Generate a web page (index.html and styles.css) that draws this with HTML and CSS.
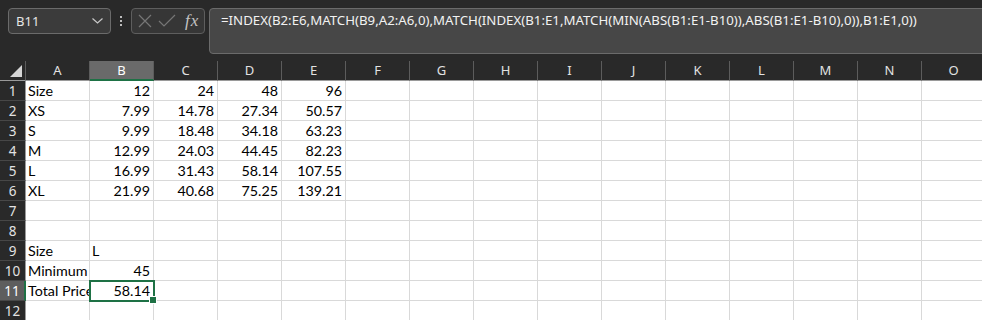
FILE: index.html
```html
<!DOCTYPE html>
<html lang="en">
<head>
    <meta charset="UTF-8">
    <title>Workbook</title>
    <link rel="stylesheet" href="styles.css">
</head>
<body>
    <div class="toolbar">
        <div class="name-box">
            <span>B11</span>
            <svg class="chevron" width="11" height="6" viewBox="0 0 11 6"><polyline points="0.5,0.5 5.5,5 10.5,0.5" fill="none" stroke="#c8c8c8" stroke-width="1.2"/></svg>
        </div>
        <div class="grip"><i></i><i></i><i></i></div>
        <div class="fx-box">
            <svg width="14" height="14" viewBox="0 0 14 14"><path d="M1 1 L13 13 M13 1 L1 13" stroke="#767676" stroke-width="1.2"/></svg>
            <svg width="18" height="14" viewBox="0 0 18 14"><polyline points="1,7 6,12 17,1" fill="none" stroke="#767676" stroke-width="1.2"/></svg>
            <span class="fx">fx</span>
        </div>
        <div class="formula">=INDEX(B2:E6,MATCH(B9,A2:A6,0),MATCH(INDEX(B1:E1,MATCH(MIN(ABS(B1:E1-B10)),ABS(B1:E1-B10),0)),B1:E1,0))</div>
    </div>

    <div class="sheet">
        <!-- column headers -->
        <div class="corner"><span class="tri"></span></div>
        <div class="ch">A</div><div class="ch active">B</div><div class="ch">C</div><div class="ch">D</div><div class="ch">E</div><div class="ch">F</div><div class="ch">G</div><div class="ch">H</div><div class="ch">I</div><div class="ch">J</div><div class="ch">K</div><div class="ch">L</div><div class="ch">M</div><div class="ch">N</div><div class="ch">O</div>

        <div class="rh">1</div><div>Size</div><div class="n">12</div><div class="n">24</div><div class="n">48</div><div class="n">96</div><div></div><div></div><div></div><div></div><div></div><div></div><div></div><div></div><div></div><div></div>
        <div class="rh">2</div><div>XS</div><div class="n">7.99</div><div class="n">14.78</div><div class="n">27.34</div><div class="n">50.57</div><div></div><div></div><div></div><div></div><div></div><div></div><div></div><div></div><div></div><div></div>
        <div class="rh">3</div><div>S</div><div class="n">9.99</div><div class="n">18.48</div><div class="n">34.18</div><div class="n">63.23</div><div></div><div></div><div></div><div></div><div></div><div></div><div></div><div></div><div></div><div></div>
        <div class="rh">4</div><div>M</div><div class="n">12.99</div><div class="n">24.03</div><div class="n">44.45</div><div class="n">82.23</div><div></div><div></div><div></div><div></div><div></div><div></div><div></div><div></div><div></div><div></div>
        <div class="rh">5</div><div>L</div><div class="n">16.99</div><div class="n">31.43</div><div class="n">58.14</div><div class="n">107.55</div><div></div><div></div><div></div><div></div><div></div><div></div><div></div><div></div><div></div><div></div>
        <div class="rh">6</div><div>XL</div><div class="n">21.99</div><div class="n">40.68</div><div class="n">75.25</div><div class="n">139.21</div><div></div><div></div><div></div><div></div><div></div><div></div><div></div><div></div><div></div><div></div>
        <div class="rh">7</div><div></div><div></div><div></div><div></div><div></div><div></div><div></div><div></div><div></div><div></div><div></div><div></div><div></div><div></div><div></div>
        <div class="rh">8</div><div></div><div></div><div></div><div></div><div></div><div></div><div></div><div></div><div></div><div></div><div></div><div></div><div></div><div></div><div></div>
        <div class="rh">9</div><div>Size</div><div>L</div><div></div><div></div><div></div><div></div><div></div><div></div><div></div><div></div><div></div><div></div><div></div><div></div><div></div>
        <div class="rh">10</div><div>Minimum</div><div class="n">45</div><div></div><div></div><div></div><div></div><div></div><div></div><div></div><div></div><div></div><div></div><div></div><div></div><div></div>
        <div class="rh active">11</div><div class="spill">Total Price</div><div class="n selected">58.14<span class="handle"></span></div><div></div><div></div><div></div><div></div><div></div><div></div><div></div><div></div><div></div><div></div><div></div><div></div><div></div>
        <div class="rh">12</div><div></div><div></div><div></div><div></div><div></div><div></div><div></div><div></div><div></div><div></div><div></div><div></div><div></div><div></div><div></div>
    </div>
</body>
</html>
```

FILE: styles.css
```css
body {
    margin: 0;
    width: 982px;
    height: 320px;
    overflow: hidden;
    background-color: #292929;
    font-family: "Noto Sans", "Open Sans", sans-serif;
}
.toolbar {
    height: 61px;
    box-sizing: border-box;
    padding: 8px 0 0 8px;
    display: flex;
    align-items: flex-start;
    background-color: #292929;
}
.name-box {
    width: 103px;
    height: 26px;
    box-sizing: border-box;
    border: 1px solid #6b6b6b;
    border-radius: 4px;
    background-color: #3b3b3b;
    display: flex;
    align-items: center;
    justify-content: space-between;
    padding: 0 7px 0 7px;
    color: #e6e6e6;
    font-size: 13px;
}
.grip {
    width: 20px;
    height: 26px;
    display: flex;
    flex-direction: column;
    align-items: center;
    justify-content: center;
    gap: 2px;
}
.grip i {
    width: 2px;
    height: 2px;
    background-color: #bdbdbd;
}
.fx-box {
    width: 74px;
    height: 26px;
    box-sizing: border-box;
    border: 1px solid #5e5e5e;
    border-radius: 4px;
    background-color: #363636;
    display: flex;
    align-items: center;
    gap: 6px;
    padding-left: 6px;
}
.fx {
    font-family: "Liberation Serif", serif;
    font-style: italic;
    font-size: 17px;
    color: #c4c4c4;
    margin-left: 3px;
    letter-spacing: 1px;
}
.formula {
    flex: 1;
    height: 46px;
    margin-left: 4px;
    margin-right: -10px;
    box-sizing: border-box;
    border: 1px solid #6b6b6b;
    border-radius: 4px;
    background-color: #474747;
    color: #f2f2f2;
    font-size: 13.25px;
    padding: 2px 0 0 11px;
    white-space: nowrap;
}
.sheet {
    display: grid;
    grid-template-columns: 26px repeat(15, 64px);
    grid-auto-rows: 20px;
    background-color: #ffffff;
    font-family: Lato, "Liberation Sans", sans-serif;
    font-size: 14.3px;
    color: #000000;
}
.sheet > div {
    box-sizing: border-box;
    border-right: 1px solid #d9d9d9;
    border-bottom: 1px solid #d9d9d9;
    padding: 0 2px;
    line-height: 20px;
    white-space: nowrap;
    position: relative;
}
.sheet > .n {
    text-align: right;
    padding-right: 3px;
}
.sheet > .spill {
    overflow: hidden;
}
.sheet > .corner,
.sheet > .ch {
    background-color: #292929;
    border-right: 1px solid #5c5c5c;
    border-bottom: 1px solid #9a9a9a;
    color: #e2e2e2;
    font-family: "Noto Sans", sans-serif;
    font-size: 13px;
    text-align: center;
    line-height: 19px;
}
.sheet > .ch.active {
    background-color: #6a6a6a;
    border-bottom: 2px solid #1e7145;
    color: #ffffff;
}
.tri {
    position: absolute;
    right: 3px;
    bottom: 3px;
    width: 0;
    height: 0;
    border-left: 12px solid transparent;
    border-bottom: 12px solid #d6d6d6;
}
.sheet > .rh {
    background-color: #292929;
    border-right: 1px solid #9a9a9a;
    border-bottom: 1px solid #474747;
    color: #e2e2e2;
    font-family: "Noto Sans", sans-serif;
    font-size: 13.5px;
    text-align: center;
    padding: 0;
}
.sheet > .rh.active {
    background-color: #5e5e5e;
    border-right: 2px solid #1e7145;
    color: #ffffff;
}
.sheet > .selected {
    outline: 2px solid #1e7145;
    outline-offset: -1px;
    z-index: 1;
}
.handle {
    position: absolute;
    right: -4px;
    bottom: -4px;
    width: 6px;
    height: 6px;
    background-color: #1e7145;
    border: 1px solid #ffffff;
}
```
